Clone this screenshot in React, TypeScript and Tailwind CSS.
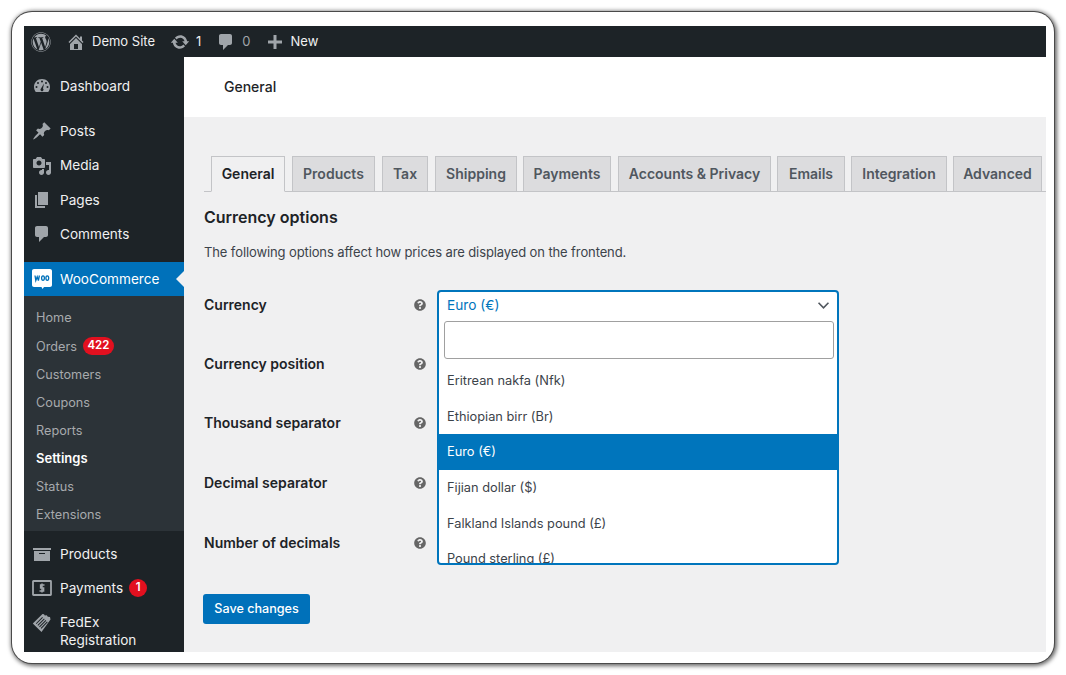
import React from "react";
import { FaWordpress, FaQuestionCircle } from "react-icons/fa";

const FONT = "font-['Inter','Liberation_Sans',sans-serif]";

function Dash({ d, className }: { d: string; className?: string }) {
  return (
    <svg viewBox="0 0 20 20" className={className} fill="currentColor">
      <path fillRule="evenodd" d={d} />
    </svg>
  );
}
const HOME = "M16 8.500l1.530 1.530-1.060 1.060L10 4.620l-6.470 6.470-1.060-1.060L10 2.500l4 4v-2h2v4zm-6-2.460l6 5.990V18H4v-5.970zM12 17v-5H8v5h4z";
const UPDATE = "M10.200 3.280c3.530 0 6.430 2.610 6.920 6h2.080l-3.500 4-3.500-4h2.320c-.450-1.970-2.210-3.440-4.320-3.440-1.450 0-2.730.710-3.540 1.780L4.950 5.660C6.230 4.200 8.110 3.280 10.200 3.280zm-.4 13.440c-3.520 0-6.430-2.610-6.920-6H.8l3.500-4c1.170 1.330 2.330 2.670 3.500 4H5.480c.450 1.970 2.210 3.440 4.320 3.440 1.450 0 2.730-.710 3.540-1.780l1.710 1.950c-1.280 1.460-3.150 2.390-5.250 2.390z";
const COMMENT = "M5 2h9c1.100 0 2 .9 2 2v7c0 1.100-.9 2-2 2h-2l-5 5v-5H5c-1.100 0-2-.9-2-2V4c0-1.100.9-2 2-2z";
const PIN = "M10.440 3.020l1.820-1.820 6.360 6.350-1.830 1.820c-1.050-.680-2.480-.570-3.410.360l-.750.750c-.920.930-1.040 2.350-.350 3.410l-1.830 1.820-2.410-2.410-2.800 2.790c-.420.420-3.380 2.710-3.800 2.290s1.860-3.390 2.280-3.810l2.790-2.790L4.100 9.360l1.830-1.820c1.050.690 2.480.570 3.400-.360l.750-.750c.930-.920 1.050-2.350.360-3.410z";
const MEDIA = "M13 11V4c0-.550-.450-1-1-1h-1.670L9 1H5L3.670 3H2c-.550 0-1 .450-1 1v7c0 .550.450 1 1 1h10c.550 0 1-.450 1-1zM7 4.500c1.380 0 2.500 1.120 2.500 2.500S8.380 9.500 7 9.500 4.500 8.380 4.500 7 5.620 4.500 7 4.500zM14 6h5v10.500c0 1.380-1.120 2.500-2.500 2.500S14 17.880 14 16.500s1.120-2.500 2.500-2.500c.170 0 .340.020.500.050V9h-3V6zm-4 8.050V13h2v3.500c0 1.380-1.120 2.500-2.500 2.500S7 17.880 7 16.500 8.120 14 9.500 14c.170 0 .340.020.500.050z";
const PAGE = "M6 15V2h10v13H6zm-1 1h8v2H3V5h2v11z";
const BOX = "M19 4v2H1V4h18zM2 7h16v10H2V7zm11 3V9H7v1h6z";
const PLUS = "M17 8.500v3h-5.500V17h-3v-5.500H3v-3h5.500V3h3v5.500H17z";
const GAUGE = "M3.760 16h12.480c1.100-1.430 1.760-3.210 1.760-5.140C18 6.400 14.420 3 10 3S2 6.400 2 10.860c0 1.930.660 3.710 1.760 5.140zM10 4.500a1 1 0 110 2 1 1 0 010-2zM6 6a1 1 0 110 2 1 1 0 010-2zm8 0a1 1 0 110 2 1 1 0 010-2zM4.500 10a1 1 0 110 2 1 1 0 010-2zm11 0a1 1 0 110 2 1 1 0 010-2zM12 7.500l-1 5.100a1.500 1.500 0 11-2 0z";

function Woo({ className }: { className?: string }) {
  return (
    <svg viewBox="0 0 20 20" className={className}>
      <path fill="#fff" d="M2 0h16c1.100 0 2 .9 2 2v14c0 1.100-.9 2-2 2h-6l-1.500 2-1-2H2c-1.100 0-2-.9-2-2V2C0 .9.900 0 2 0z" />
      <path fill="none" stroke="#0071ba" strokeWidth="1.300" d="M3 6.500l.8 5 1.400-3.800 1.200 3.800 1-5" />
      <ellipse cx="11" cy="9.100" rx="1.400" ry="2.300" fill="none" stroke="#0071ba" strokeWidth="1.300" />
      <ellipse cx="15.300" cy="9.100" rx="1.400" ry="2.300" fill="none" stroke="#0071ba" strokeWidth="1.300" />
    </svg>
  );
}
function Pay({ className }: { className?: string }) {
  return (
    <svg viewBox="0 0 20 16" className={className} fill="none">
      <rect x="1" y="1" width="18" height="14" stroke="currentColor" strokeWidth="1.800" rx="0.500" />
      <path stroke="currentColor" strokeWidth="1.500" d="M12.500 5H8.600v2.900h3v3H7.500M10 3.400v9.200" />
    </svg>
  );
}
function Tag({ className }: { className?: string }) {
  return (
    <svg viewBox="0 0 20 20" className={className} fill="currentColor">
      <path fillRule="evenodd" d="M10.500 1l1.500.3.800 1.300 2-.3 1 1.500 2.200.3.500 2.400L9.500 19 .8 10.500zM10.200 4L3.800 10.400l.7.700 6.400-6.400zM12 5.500l-6.500 6.500.7.700 6.500-6.500zM13.600 7l-6.500 6.500.7.700 6.500-6.500zM15 8.500L8.700 15l.7.700 6.300-6.500z" />
    </svg>
  );
}

function SideItem({ icon, label, extra, className }: { icon: React.ReactNode; label: string; extra?: React.ReactNode; className?: string }) {
  return (
    <div className={`flex shrink-0 items-center text-[13.6px] text-[#f0f0f1] ${className ?? "h-[34.400px]"}`}>
      <span className="flex w-[36px] justify-center text-[#a0a5aa]">{icon}</span>
      <span>{label}</span>
      {extra}
    </div>
  );
}

function Sub({ label, className, extra }: { label: string; className?: string; extra?: React.ReactNode }) {
  return (
    <div className={`flex h-[28.100px] items-center pl-[12px] ${className ?? "text-[12.7px] text-[#a7aaad]"}`}>
      {label}
      {extra}
    </div>
  );
}

const tabs = [
  { t: "General", w: "w-[74px]" },
  { t: "Products", w: "ml-[7px] w-[83px]" },
  { t: "Tax", w: "ml-[7px] w-[46px]" },
  { t: "Shipping", w: "ml-[7px] w-[82px]" },
  { t: "Payments", w: "ml-[6px] w-[88px]" },
  { t: "Accounts & Privacy", w: "ml-[7px] w-[153px]" },
  { t: "Emails", w: "ml-[6px] w-[68px]" },
  { t: "Integration", w: "ml-[6px] w-[96px]" },
  { t: "Advanced", w: "ml-[6px] w-[89px]" },
];
const fields = [
  { label: "Currency", top: "h-[59px]" },
  { label: "Currency position", top: "h-[59px]" },
  { label: "Thousand separator", top: "h-[60px]" },
  { label: "Decimal separator", top: "h-[60px]" },
  { label: "Number of decimals", top: "h-[41px]" },
];
const options = ["Eritrean nakfa (Nfk)", "Ethiopian birr (Br)", "Euro (€)", "Fijian dollar ($)", "Falkland Islands pound (£)", "Pound sterling (£)"];

export default function App() {
  return (
    <div className={`h-[675px] w-[1066px] overflow-hidden bg-white pl-[12px] pt-[12px] ${FONT}`}>
      <div className="h-[651px] w-[1042px] overflow-hidden rounded-[20px] bg-white pb-[11px] pl-[12px] pr-[8px] pt-[14px] shadow-[0_0_0_1px_#4a4a4a,1px_1px_4px_2px_rgba(0,0,0,0.6)]">
        <div className="flex h-[31px] items-center bg-[#1d2327] text-[13px] text-[#f0f0f1]">
          <FaWordpress className="ml-[7px] h-[20px] w-[20px] text-[#a0a5aa]" />
          <Dash d={HOME} className="ml-[15px] h-[20px] w-[20px] text-[#a0a5aa]" />
          <span className="ml-[6px]">Demo Site</span>
          <Dash d={UPDATE} className="ml-[15px] h-[20px] w-[20px] text-[#a0a5aa]" />
          <span className="ml-[6px]">1</span>
          <Dash d={COMMENT} className="ml-[15px] h-[20px] w-[20px] text-[#a0a5aa]" />
          <span className="ml-[6px] text-[#a0a5aa]">0</span>
          <Dash d={PLUS} className="ml-[14px] h-[20px] w-[20px] text-[#a0a5aa]" />
          <span className="ml-[6px]">New</span>
        </div>
        <div className="flex h-[595px] overflow-hidden">
          <div className="flex w-[160px] shrink-0 flex-col overflow-hidden bg-[#1d2327] pt-[11.600px]">
            <SideItem icon={<Dash d={GAUGE} className="h-[20px] w-[20px]" />} label="Dashboard" />
            <div className="h-[11px] shrink-0" />
            <SideItem icon={<Dash d={PIN} className="h-[20px] w-[20px]" />} label="Posts" />
            <SideItem icon={<Dash d={MEDIA} className="h-[20px] w-[20px]" />} label="Media" />
            <SideItem icon={<Dash d={PAGE} className="h-[20px] w-[20px]" />} label="Pages" />
            <SideItem icon={<Dash d={COMMENT} className="h-[20px] w-[20px]" />} label="Comments" />
            <div className="h-[10.400px] shrink-0" />
            <div className="relative flex h-[34px] shrink-0 items-center bg-[#0071ba] text-[13.6px] text-white">
              <span className="flex w-[36px] justify-center"><Woo className="h-[20px] w-[20px]" /></span>
              <span>WooCommerce</span>
              <span className="absolute right-0 top-[9px] h-0 w-0 border-y-[8px] border-r-[8px] border-y-transparent border-r-[#f0f0f1]" />
            </div>
            <div className="flex h-[235px] shrink-0 flex-col bg-[#2c3338] pt-[8px]">
              <Sub label="Home" />
              <Sub
                label="Orders"
                extra={<span className="ml-[6px] flex h-[18px] w-[31px] items-center justify-center rounded-full bg-[#e2101f] text-[11.500px] font-semibold text-white">422</span>}
              />
              <Sub label="Customers" />
              <Sub label="Coupons" />
              <Sub label="Reports" />
              <Sub label="Settings" className="text-[13px] font-semibold text-white" />
              <Sub label="Status" />
              <Sub label="Extensions" />
            </div>
            <div className="h-[6px] shrink-0" />
            <SideItem icon={<Dash d={BOX} className="h-[20px] w-[20px]" />} label="Products" className="h-[34px]" />
            <SideItem
              icon={<Pay className="h-[16px] w-[20px]" />}
              label="Payments"
              className="h-[34px]"
              extra={<span className="ml-[6px] flex h-[18px] w-[18px] items-center justify-center rounded-full bg-[#e2101f] text-[11.500px] font-semibold text-white">1</span>}
            />
            <div className="mt-[8px] flex text-[13.6px] leading-[18px] text-[#f0f0f1]">
              <span className="flex w-[36px] justify-center text-[#a0a5aa]"><Tag className="h-[20px] w-[20px]" /></span>
              <span>FedEx<br />Registration</span>
            </div>
          </div>
          <div className="relative min-w-0 flex-1 bg-[#f0f0f1]">
            <div className="flex h-[60px] items-center bg-white pb-[1px] pl-[40px] text-[14px] font-medium text-[#1d2327]">General</div>
            <div className="ml-[20px] mt-[39px] flex h-[36px] border-b border-[#c3c4c7] pl-[7px]">
              {tabs.map((x, i) => (
                <div
                  key={x.t}
                  className={`flex h-[36px] shrink-0 items-center justify-center whitespace-nowrap border border-[#c3c4c7] pb-[2px] text-[14px] font-semibold ${x.w} ${
                    i === 0 ? "border-b-[#f0f0f1] bg-[#f0f0f1] text-[#1d2327]" : "bg-[#dcdcde] text-[#50575e]"
                  }`}
                >
                  {x.t}
                </div>
              ))}
            </div>
            <h2 className="ml-[20px] mt-[14px] text-[16px] font-semibold leading-[22px] text-[#1d2327]">Currency options</h2>
            <p className="ml-[20px] mt-[15px] text-[13px] leading-[18px] tracking-[-0.11px] text-[#3c434a]">The following options affect how prices are displayed on the frontend.</p>
            <div className="ml-[20px] mt-[34px] w-[222px]">
              {fields.map((f) => (
                <div key={f.label} className={`flex items-start justify-between ${f.top}`}>
                  <span className="text-[14px] font-semibold leading-[20px] text-[#1d2327]">{f.label}</span>
                  <FaQuestionCircle className="mt-[4px] h-[12px] w-[12px] text-[#666]" />
                </div>
              ))}
            </div>
            <button className="ml-[19px] mt-[20px] flex h-[30px] w-[107px] items-center justify-center rounded-[3px] bg-[#0071ba] text-[12.600px] font-medium text-white">Save changes</button>

            <div className="absolute left-[253px] top-[233px] h-[275px] w-[402px] overflow-hidden rounded-[4px] border-2 border-[#0075bc] bg-white">
              <div className="flex h-[29px] items-center justify-between pb-[2px] pl-[8px] pr-[7px] text-[13.700px] text-[#0075bc]">
                <span>Euro (€)</span>
                <svg viewBox="0 0 14 10" className="h-[9px] w-[13px] text-[#50575e]" fill="none" stroke="currentColor" strokeWidth="1.800">
                  <path d="M1.500 2l5.500 5.500L12.500 2" />
                </svg>
              </div>
              <div className="ml-[5px] h-[38px] w-[390px] rounded-[3px] border border-[#a0a0a0] bg-white" />
              <div className="mt-[4px]">
                {options.map((o, i) => (
                  <div
                    key={o}
                    className={`flex h-[35.600px] items-center pl-[8px] text-[12.800px] ${i === 2 ? "bg-[#0075bc] text-white" : "text-[#3c434a]"}`}
                  >
                    {o}
                  </div>
                ))}
              </div>
            </div>
          </div>
        </div>
      </div>
    </div>
  );
}
